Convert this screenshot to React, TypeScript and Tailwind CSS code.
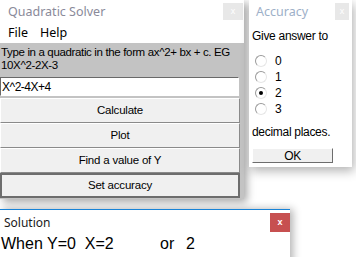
import React from 'react';

const ui = { fontFamily: '"Noto Sans", "Open Sans", sans-serif' };
const ms = { fontFamily: '"Liberation Sans", Arial, sans-serif' };

function WinButton({ label, focused }: { label: string; focused?: boolean }) {
    return (
        <div
            className={
                'flex h-[25px] items-center justify-center bg-[#f0f0f0] text-[11.5px] tracking-[-0.2px] text-black ' +
                (focused
                    ? 'border-2 border-[#6d6d6d]'
                    : 'border border-t-white border-l-white border-r-[#8a8a8a] border-b-[#8a8a8a]')
            }
        >
            {label}
        </div>
    );
}

function Radio({ value, checked }: { value: string; checked?: boolean }) {
    return (
        <div className="flex h-[16px] items-center gap-[8px]">
            <span className="flex h-[12px] w-[12px] items-center justify-center rounded-full border border-t-[#9a9a9a] border-l-[#9a9a9a] border-r-[#e6e6e6] border-b-[#e6e6e6] bg-white">
                {checked && <span className="h-[4px] w-[4px] rounded-full bg-black" />}
            </span>
            <span className="text-[12px]">{value}</span>
        </div>
    );
}

export default function App() {
    return (
        <div className="relative h-[257px] w-[356px] overflow-hidden bg-white" style={ms}>
            {/* main window */}
            <div className="absolute left-0 top-0 flex h-[199px] w-[244px] flex-col bg-white shadow-[3px_3px_8px_rgba(0,0,0,0.35)]">
                <div className="flex h-[24px] items-start justify-between">
                    <span className="ml-[8px] mt-[3px] text-[12.5px] text-[#8a8a9a]" style={ui}>
                        Quadratic Solver
                    </span>
                    <span className="mr-[1px] mt-[3px] flex h-[17px] w-[20px] items-center justify-center bg-[#e8e8e8] text-[9px] text-white">
                        x
                    </span>
                </div>
                <div className="flex h-[19px] items-center gap-[12px] pl-[8px] text-[12.5px] text-black" style={ui}>
                    <span>File</span>
                    <span>Help</span>
                </div>
                <div className="flex flex-1 flex-col bg-[#c3c3c3] pr-[4px]">
                    <div className="h-[34px] pl-[1px] pt-[3px] text-[11.5px] leading-[13px] tracking-[-0.35px] text-black">
                        Type in a quadratic in the form ax^2+ bx + c. EG
                        <br />
                        10X^2-2X-3
                    </div>
                    <div className="flex h-[19px] w-[239px] items-center border border-t-[#696969] border-l-[#696969] border-r-white border-b-white bg-white pl-[1px] text-[12px] tracking-[-0.5px] text-black">
                        X^2-4X+4
                    </div>
                    <div className="mt-[2px] flex w-[240px] flex-col">
                        <WinButton label="Calculate" />
                        <WinButton label="Plot" />
                        <WinButton label="Find a value of Y" />
                        <WinButton label="Set accuracy" focused />
                    </div>
                </div>
            </div>

            {/* accuracy window */}
            <div className="absolute left-[249px] top-0 flex h-[167px] w-[103px] flex-col bg-white shadow-[2px_4px_10px_rgba(0,0,0,0.3)]">
                <div className="flex h-[24px] items-start justify-between">
                    <span className="ml-[7px] mt-[3px] text-[12.5px] text-[#9db0c8]" style={ui}>
                        Accuracy
                    </span>
                    <span className="mr-[3px] mt-[3px] flex h-[17px] w-[14px] items-center justify-center bg-[#e8e8e8] text-[9px] text-white">
                        x
                    </span>
                </div>
                <div className="pl-[3px] text-[12px] tracking-[-0.3px] text-black">
                    <div className="mt-[3px]">Give answer to</div>
                    <div className="mt-[8px] flex flex-col pl-[3px]">
                        <Radio value="0" />
                        <Radio value="1" />
                        <Radio value="2" checked />
                        <Radio value="3" />
                    </div>
                    <div className="mt-[6px]">decimal places.</div>
                    <div className="mt-[7px] flex h-[15px] w-[81px] items-center justify-center border border-t-white border-l-white border-r-[#6d6d6d] border-b-[#6d6d6d] bg-[#f0f0f0] text-[12px]">
                        OK
                    </div>
                </div>
            </div>

            {/* solution window */}
            <div className="absolute left-0 top-[209px] flex h-[60px] w-[290px] flex-col border-t border-[#1883d7] bg-white shadow-[3px_0_8px_rgba(0,0,0,0.3)]">
                <div className="flex h-[22px] items-start justify-between">
                    <span className="ml-[4px] mt-[4px] text-[12px] text-[#1a1a1a]" style={ui}>
                        Solution
                    </span>
                    <span className="mt-[3px] flex h-[19px] w-[20px] items-center justify-center bg-[#c75050] text-[9px] font-bold text-white">
                        x
                    </span>
                </div>
                <div className="flex items-center pl-[1px] text-[16px] font-light text-black">
                    <span className="w-[159px]">When Y=0&nbsp; X=2</span>
                    <span className="w-[26px]">or</span>
                    <span>2</span>
                </div>
            </div>
        </div>
    );
}
